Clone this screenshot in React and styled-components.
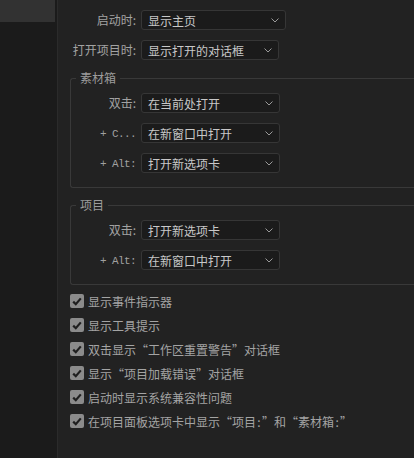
import React from "react";
import styled, { createGlobalStyle } from "styled-components";

const GlobalStyle = createGlobalStyle`
    html, body {
        margin: 0;
        padding: 0;
        background: #222222;
    }
    body {
        font-family: "Noto Sans CJK SC", "Liberation Sans", sans-serif;
        font-size: 12px;
    }
`;

const Window = styled.div`
    display: flex;
    width: 414px;
    height: 458px;
    overflow: hidden;
    background: #222222;
`;

const Sidebar = styled.div`
    width: 57px;
    flex-shrink: 0;
    background: #1b1b1b;
    border-right: 1px solid #2b2b2b;
`;

const SidebarItem = styled.div`
    height: 22px;
    margin-right: 2px;
    background: ${(p) => (p.active ? "#323232" : "transparent")};
`;

const Content = styled.div`
    flex: 1;
    padding: 10px 0 0 12px;
    overflow: hidden;
`;

const Row = styled.div`
    display: flex;
    align-items: center;
    height: 20px;
    margin-bottom: ${(p) => (p.last ? "0" : "10px")};
`;

const Label = styled.div`
    width: ${(p) => p.width}px;
    flex-shrink: 0;
    text-align: right;
    color: #a2a2a2;
    font-size: 12px;
    line-height: 20px;
    white-space: nowrap;
`;

const Key = styled.span`
    font-family: "Liberation Mono", "DejaVu Sans Mono", monospace;
    font-size: 11px;
    letter-spacing: -0.6px;
    color: #a0a0a0;
`;

const Select = styled.div`
    box-sizing: border-box;
    width: ${(p) => p.width}px;
    height: 20px;
    margin-left: 5px;
    padding: 0 6px;
    display: flex;
    align-items: center;
    justify-content: space-between;
    background: #1b1b1b;
    border: 1px solid #363636;
    border-radius: 3px;
    color: #c8c8c8;
    font-size: 12px;
    white-space: nowrap;
`;

const Group = styled.fieldset`
    box-sizing: border-box;
    width: 380px;
    margin: ${(p) => p.top}px 0 0 0;
    padding: 7px 0 14px 0;
    border: 1px solid #393939;
    border-right: none;
    border-radius: 3px 0 0 3px;
    min-width: 0;
`;

const Legend = styled.legend`
    margin-left: 5px;
    padding: 0 4px;
    height: 16px;
    line-height: 16px;
    color: #9c9c9c;
    font-size: 12px;
`;

const CheckList = styled.div`
    margin-top: 4px;
`;

const CheckRow = styled.div`
    display: flex;
    align-items: center;
    height: 24px;
`;

const Box = styled.span`
    width: 14px;
    height: 14px;
    flex-shrink: 0;
    border-radius: 2px;
    background: #8b8b8b;
    display: flex;
    align-items: center;
    justify-content: center;
`;

const CheckText = styled.span`
    margin-left: 4px;
    color: #a4a4a4;
    font-size: 12px;
    white-space: nowrap;
`;

// punctuation cell, fixed width like the bitmap UI font
const Punct = styled.span`
    display: inline-block;
    width: ${(p) => p.w}px;
    text-align: center;
`;

const Chevron = () => (
    <svg width="8" height="5" viewBox="0 0 8 5">
        <polyline points="0.5,0.5 4,4 7.5,0.5" fill="none" stroke="#9a9a9a" strokeWidth="1" />
    </svg>
);

const Tick = () => (
    <svg width="10" height="9" viewBox="0 0 10 9">
        <polyline points="1.2,4.6 3.8,7.2 8.8,1.4" fill="none" stroke="#1f1f1f" strokeWidth="2.2" />
    </svg>
);

const Dropdown = ({ width, value }) => (
    <Select width={width}>
        <span>{value}</span>
        <Chevron />
    </Select>
);

// split quotes and colons into fixed cells
const spaced = (text) =>
    text.split(/([“”:])/).map((part, i) => {
        if (part === "“" || part === "”") return <Punct key={i} w={12}>{part}</Punct>;
        if (part === ":") return <Punct key={i} w={6}>{part}</Punct>;
        return part;
    });

const checks = [
    "显示事件指示器",
    "显示工具提示",
    "双击显示“工作区重置警告”对话框",
    "显示“项目加载错误”对话框",
    "启动时显示系统兼容性问题",
    "在项目面板选项卡中显示“项目:”和“素材箱:”",
];

export default function App() {
    return (
        <>
            <GlobalStyle />
            <Window>
                <Sidebar>
                    <SidebarItem active />
                </Sidebar>
                <Content>
                    <Row>
                        <Label width={66}>启动时:</Label>
                        <Dropdown width={145} value="显示主页" />
                    </Row>
                    <Row last>
                        <Label width={66}>打开项目时:</Label>
                        <Dropdown width={138} value="显示打开的对话框" />
                    </Row>

                    <Group top={10}>
                        <Legend>素材箱</Legend>
                        <Row>
                            <Label width={65}>双击:</Label>
                            <Dropdown width={139} value="在当前处打开" />
                        </Row>
                        <Row>
                            <Label width={65}><Key>+ C...</Key></Label>
                            <Dropdown width={139} value="在新窗口中打开" />
                        </Row>
                        <Row last>
                            <Label width={65}><Key>+ Alt:</Key></Label>
                            <Dropdown width={139} value="打开新选项卡" />
                        </Row>
                    </Group>

                    <Group top={9}>
                        <Legend>项目</Legend>
                        <Row>
                            <Label width={65}>双击:</Label>
                            <Dropdown width={139} value="打开新选项卡" />
                        </Row>
                        <Row last>
                            <Label width={65}><Key>+ Alt:</Key></Label>
                            <Dropdown width={139} value="在新窗口中打开" />
                        </Row>
                    </Group>

                    <CheckList>
                        {checks.map((text) => (
                            <CheckRow key={text}>
                                <Box><Tick /></Box>
                                <CheckText>{spaced(text)}</CheckText>
                            </CheckRow>
                        ))}
                    </CheckList>
                </Content>
            </Window>
        </>
    );
}
